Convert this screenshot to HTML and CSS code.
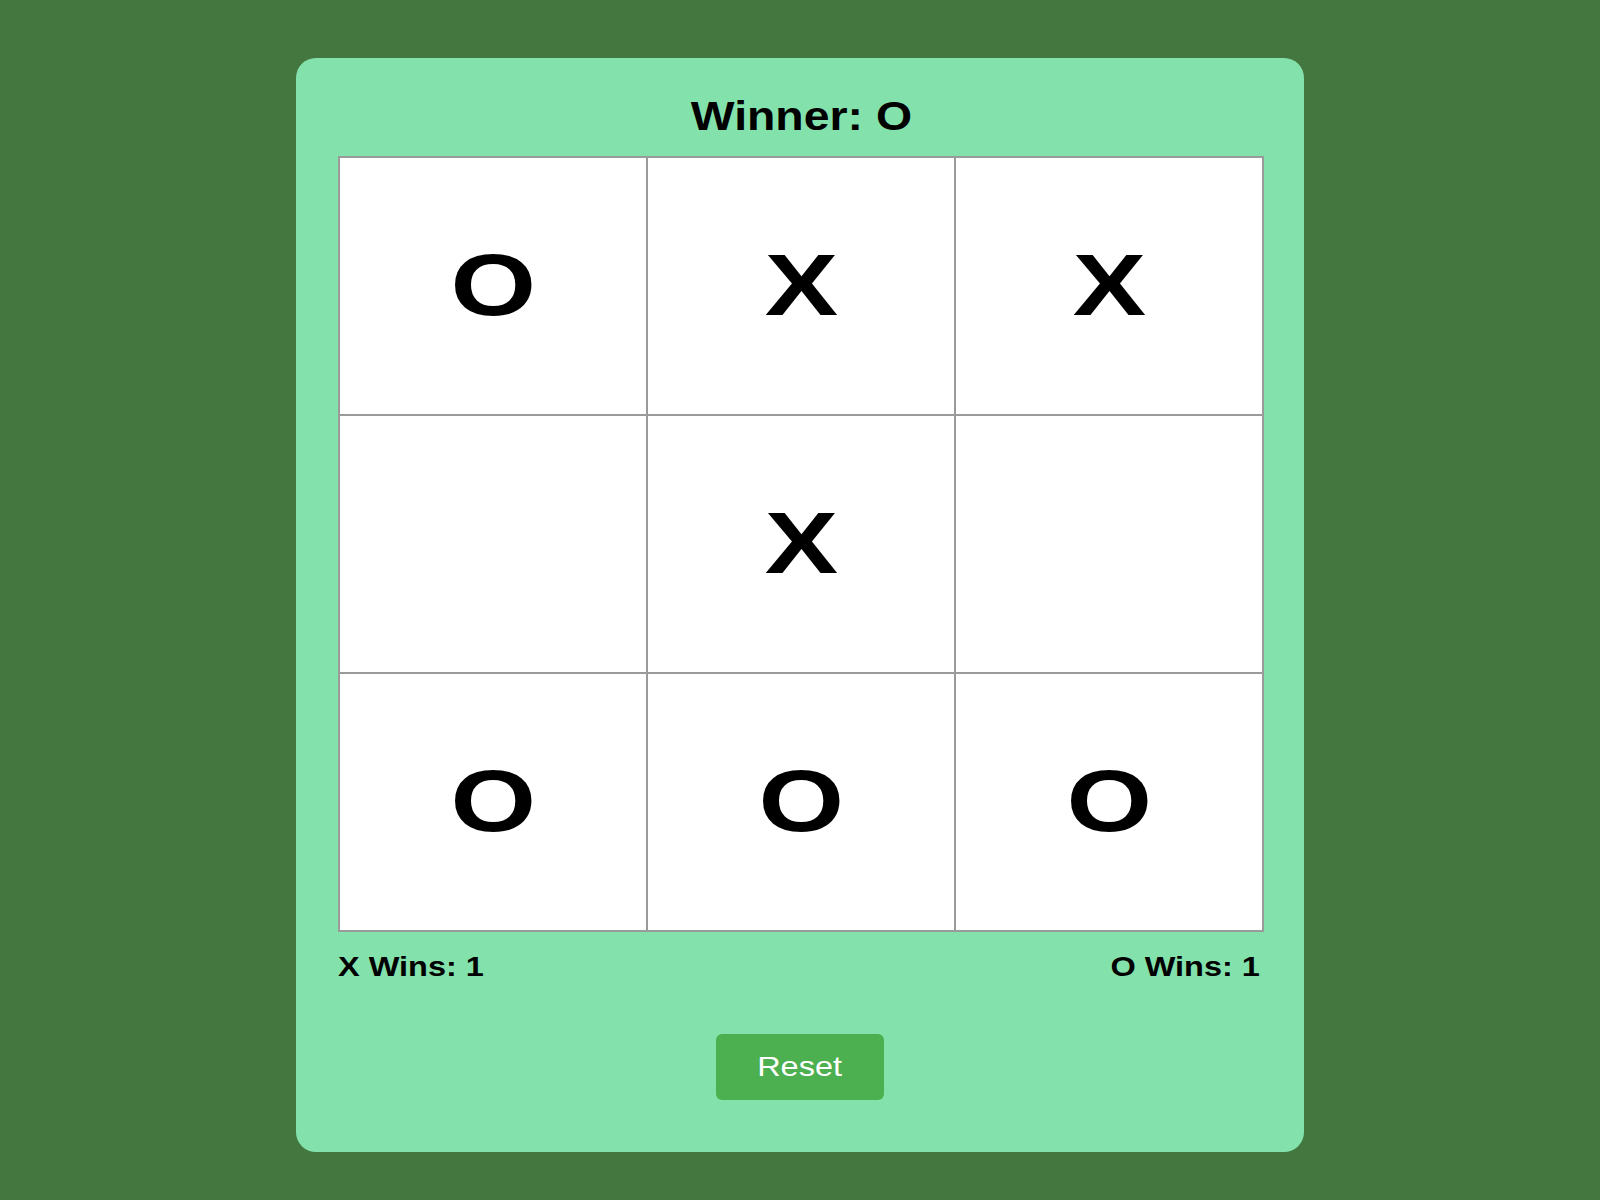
FILE: index.html
```html
<!DOCTYPE html>
<html lang="en">
<head>
<meta charset="utf-8">
<title>Tic Tac Toe</title>
<link rel="stylesheet" href="styles.css">
</head>
<body>
<div class="card">
  <h1 class="title"><span class="stretch">Winner: O</span></h1>
  <div class="board">
    <div class="cell"><span class="mark">O</span></div>
    <div class="cell"><span class="mark">X</span></div>
    <div class="cell"><span class="mark">X</span></div>
    <div class="cell"></div>
    <div class="cell"><span class="mark">X</span></div>
    <div class="cell"></div>
    <div class="cell"><span class="mark">O</span></div>
    <div class="cell"><span class="mark">O</span></div>
    <div class="cell"><span class="mark">O</span></div>
  </div>
  <div class="scores">
    <span class="score score-x">X Wins: 1</span>
    <span class="score score-o">O Wins: 1</span>
  </div>
  <div class="actions">
    <button class="reset"><span class="stretch">Reset</span></button>
  </div>
</div>
</body>
</html>
```
FILE: styles.css
```css
html, body {
  margin: 0;
  padding: 0;
}
body {
  background: #447740;
  min-height: 1200px;
  font-family: "Liberation Sans", Arial, sans-serif;
  display: flex;
  justify-content: center;
  align-items: flex-start;
  padding-top: 58px;
  box-sizing: border-box;
}
.card {
  width: 1008px;
  box-sizing: border-box;
  background: #83e2ab;
  border-radius: 20px;
  padding: 38px 40px 52px 42px;
  display: flex;
  flex-direction: column;
}
.stretch {
  display: inline-block;
  transform: scaleX(1.16);
}
.title {
  margin: 0 0 20px 0;
  height: 40px;
  font-size: 40px;
  line-height: 40px;
  font-weight: 700;
  text-align: center;
  color: #000;
}
.board {
  width: 926px;
  height: 776px;
  box-sizing: border-box;
  display: grid;
  grid-template-columns: repeat(3, 1fr);
  grid-template-rows: repeat(3, 1fr);
  border: 1px solid #9a9a9a;
  background: #fff;
}
.cell {
  border: 1px solid #9a9a9a;
  display: flex;
  align-items: center;
  justify-content: center;
  font-size: 88px;
  font-weight: 700;
  color: #000;
  line-height: 1;
}
.mark {
  display: inline-block;
  transform: scaleX(1.25);
  margin-top: -2px;
}
.scores {
  width: 926px;
  margin-top: 19px;
  height: 32px;
  display: flex;
  justify-content: space-between;
  font-size: 28px;
  line-height: 32px;
  font-weight: 700;
  color: #000;
}
.score {
  display: inline-block;
  transform: scaleX(1.16);
}
.score-x {
  transform-origin: left center;
}
.score-o {
  transform-origin: right center;
  margin-right: 4px;
}
.actions {
  margin-top: 51px;
  display: flex;
  justify-content: center;
  padding-right: 2px;
}
.reset {
  width: 168px;
  height: 66px;
  border: none;
  border-radius: 6px;
  background: #4caf50;
  color: #fff;
  font-family: "Liberation Sans", Arial, sans-serif;
  font-size: 28px;
  padding: 0;
  cursor: pointer;
}
```
